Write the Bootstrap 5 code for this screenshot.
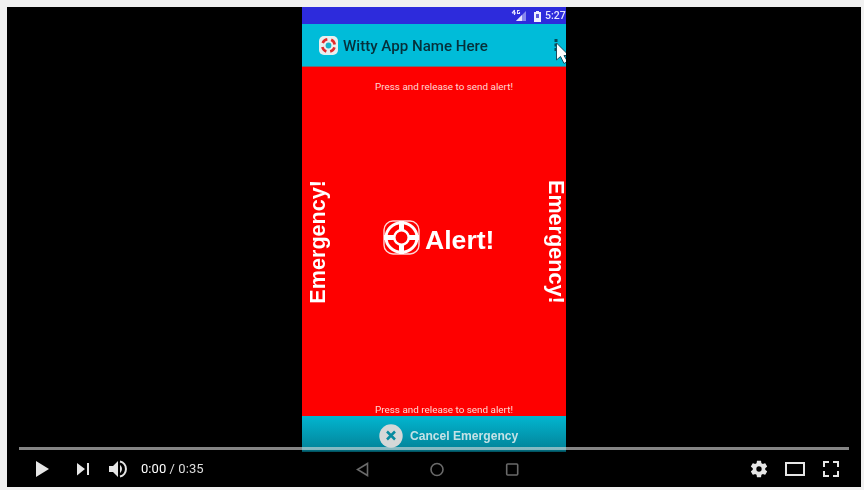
<!DOCTYPE html>
<html lang="en">
<head>
<meta charset="utf-8">
<meta name="viewport" content="width=device-width, initial-scale=1">
<title>Video player</title>
<link href="https://cdn.jsdelivr.net/npm/bootstrap@5.3.0/dist/css/bootstrap.min.css" rel="stylesheet">
<style>
body{background:#f1f1f1;padding:7px 3px 3px 7px;height:490px;overflow:hidden;font-family:Roboto,"Liberation Sans",sans-serif}
svg{display:block;flex:none}
.player{width:854px;height:480px;background:#000}
.phone{width:264px;height:480px;margin-left:295px}
.phone>*{flex:none}
.soft{filter:blur(.4px)}
.status-strip{height:17px;background:#2d2bdc;color:#e4e4ff;font-size:10.5px;font-weight:500}
.status-strip .clock{width:21px;margin-left:4px;white-space:nowrap}
.app-bar{height:43px;background:#00bcd9;border-bottom:1px solid #68727a;padding-left:17px}
.app-title{color:#06303a;font-size:15.1px;font-weight:500;line-height:20px;margin-left:5px;padding-top:2px;white-space:nowrap}
.alert-area{height:349px;background:#fe0000;color:#fff;font-family:"Liberation Sans",Arial,sans-serif}
.hint{font-family:Roboto,sans-serif;font-size:9.9px;line-height:14px;color:#ffd9d4;white-space:nowrap;padding-left:20px;text-align:center}
.hint-top{padding-top:13px}
.hint-bottom{margin-top:auto;margin-bottom:-1px}
.alert-row{height:124px;margin-top:86px}
.side-word{flex:none;width:26px;writing-mode:vertical-rl;font-size:21.6px;line-height:26px;font-weight:700;white-space:nowrap}
.side-word.up{margin-left:3px;transform:rotate(180deg)}
.alert-mid{margin-left:52px;width:160px;gap:5px;flex:none;padding-bottom:9px}
.alert-word{font-size:26.6px;line-height:30px;font-weight:700;padding-top:4px}
.cancel-bar{height:36px;background:linear-gradient(#02b6d0,#03849a 92%,#024a56);color:#c4e2e6;font-family:"Liberation Sans",Arial,sans-serif;font-size:12.1px;font-weight:700;padding:3px 0 0 77px}
.cancel-word{margin-left:7px;padding-top:1px}
.nav-keys{height:35px;background:#000;padding-left:54px}
.chrome{height:40px;padding:0 12px}
.progress-line{height:3px;background:rgba(221,221,221,.6)}
.controls{height:36px;margin-top:1px;color:#ddd;font-size:13px}
.time-text{margin-left:12px;letter-spacing:.06px}
.pointer{right:0;top:32px}
</style>
<script src="https://cdn.jsdelivr.net/npm/bootstrap@5.3.0/dist/js/bootstrap.bundle.min.js"></script>
</head>
<body>
<main class="player position-relative overflow-hidden">
  <div class="phone position-relative d-flex flex-column overflow-hidden">
    <div class="status-strip d-flex align-items-center justify-content-end">
      <svg width="15" height="13" viewBox="0 0 15 13" fill="#e4e4ff"><path d="M15 2v10H5z" opacity=".5"/><path d="M11 6v6H5z"/><path d="M3.500 1v5M1 4h4M3.500 1 1 4M8.500 1.500H6.500v3h2V3" fill="none" stroke="#e4e4ff" stroke-width="1.100"/></svg>
      <svg class="ms-2" width="7" height="12" viewBox="0 0 7 12"><path d="M0 2h2V1h3v1h2v10H0z" fill="#f0f0ff"/><path d="M2 4h3v4H2z" fill="#5c58dc"/></svg>
      <span class="clock soft">5:27</span>
    </div>
    <div class="app-bar d-flex align-items-center soft">
      <svg width="19" height="19" viewBox="0 0 19 19"><rect width="19" height="19" rx="5" fill="#e9efef"/><circle cx="9.500" cy="9.500" r="6.300" fill="none" stroke="#e32a2a" stroke-width="2.600" stroke-dasharray="5.900 3.996" stroke-dashoffset="-2"/><circle cx="9.500" cy="9.500" r="2.900" fill="#16b4cb"/></svg>
      <span class="app-title">Witty App Name Here</span>
    </div>
    <div class="alert-area d-flex flex-column soft">
      <div class="hint hint-top">Press and release to send alert!</div>
      <div class="alert-row d-flex align-items-center">
        <span class="side-word up">Emergency!</span>
        <div class="alert-mid d-flex align-items-center">
          <svg width="37" height="35" viewBox="0 0 37 35"><rect x="1" y="1" width="35" height="33" rx="9" fill="none" stroke="#ffd5d5" stroke-width="1.400"/><g fill="none" stroke="#fff"><ellipse cx="18.500" cy="17.500" rx="15.500" ry="14.700" stroke-width="3"/><circle cx="18.500" cy="17.500" r="7.200" stroke-width="2.500"/><path d="M18.500 1v9M18.500 25v9M1 17.500h10M26 17.500h10" stroke-width="5"/></g></svg>
          <span class="alert-word">Alert!</span>
        </div>
        <span class="side-word">Emergency!</span>
      </div>
      <div class="hint hint-bottom">Press and release to send alert!</div>
    </div>
    <div class="cancel-bar d-flex align-items-center soft">
      <svg width="24" height="24" viewBox="0 0 24 24"><circle cx="12" cy="12" r="11.700" fill="#d5d8d8"/><path d="m8 7.500 8 8m0-8-8 8" stroke="#078ba0" stroke-width="2.500"/></svg>
      <span class="cancel-word text-nowrap">Cancel Emergency</span>
    </div>
    <div class="nav-keys d-flex align-items-center soft">
      <svg width="166" height="16" viewBox="0 0 166 16" fill="none" stroke="#6a6a6a" stroke-width="1.600"><path d="M11.500 1.500v12L1.500 7.500z"/><circle cx="81" cy="7.500" r="6"/><rect x="150.700" y="2" width="11" height="11" rx="1"/></svg>
    </div>
    <svg class="pointer position-absolute" width="14" height="28" viewBox="0 0 14 28"><path d="M2.500 0h3v3h-3zM2.500 4.500h3v3h-3zM2.500 9h3v3h-3z" fill="#064a58"/><path d="M4.500 4v17l4-3.500 3.500 7 3.500-2-3.500-6h5z" fill="#fff" stroke="#164e60"/></svg>
  </div>
  <div class="chrome position-absolute bottom-0 start-0 end-0">
    <div class="progress-line"></div>
    <div class="controls d-flex align-items-center">
      <svg width="110" height="36" viewBox="19 451 110 36" fill="#e6e6e6"><path d="m36 461 13 8-13 8zM77 463l8 6-8 6.500zM87 463h2v12h-2zM109 466h4l5-5v16l-5-5h-4z"/><path d="M120 464.800q4 4.200 0 8.400z"/><path d="M120 461.500a7.700 7.700 0 0 1 0 15" fill="none" stroke="#e6e6e6" stroke-width="2"/></svg>
      <span class="time-text text-nowrap"><span class="text-white">0:00</span> / 0:35</span>
      <svg class="ms-auto" width="100" height="36" viewBox="749 451 100 36"><path transform="translate(749 459) scale(.833)" fill="#e6e6e6" d="M19.430 12.980c.04-.32.070-.64.070-.98s-.03-.66-.07-.98l2.110-1.650c.19-.15.240-.42.120-.64l-2-3.460c-.12-.22-.39-.3-.61-.22l-2.490 1c-.52-.4-1.080-.73-1.690-.98l-.38-2.650C14.460 2.180 14.250 2 14 2h-4c-.25 0-.46.180-.49.420l-.38 2.650c-.61.250-1.170.590-1.690.980l-2.490-1c-.23-.09-.49 0-.61.220l-2 3.460c-.13.220-.07.490.120.640l2.110 1.650c-.04.320-.07.650-.07.980s.03.660.070.980l-2.110 1.650c-.19.150-.24.420-.12.640l2 3.460c.12.220.39.300.61.220l2.490-1c.52.400 1.080.730 1.690.980l.38 2.650c.03.240.240.420.490.420h4c.25 0 .46-.18.490-.42l.38-2.650c.61-.25 1.170-.59 1.690-.98l2.490 1c.23.090.490 0 .61-.22l2-3.460c.12-.22.070-.49-.12-.64zM12 15.200a3.200 3.200 0 1 1 0-6.400 3.200 3.200 0 0 1 0 6.400z"/><g fill="none" stroke="#e6e6e6" stroke-width="2"><path d="M786 463h18v12h-18zM824 467v-5h5M833 462h5v5M838 471v5h-5M829 476h-5v-5"/></g></svg>
    </div>
  </div>
</main>
</body>
</html>
